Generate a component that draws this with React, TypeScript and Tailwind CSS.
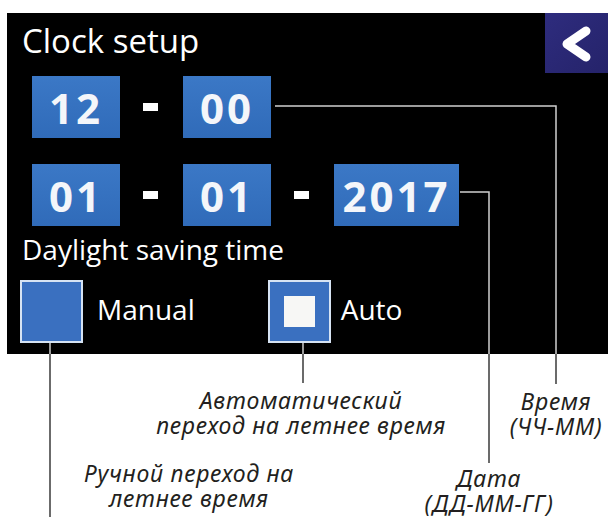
import { ReactNode } from "react";

const ValueBox = ({ value, wide }: { value: string; wide?: boolean }) => (
  <div
    className={`flex h-[62px] items-center justify-center bg-gradient-to-b from-[#3b78c6] to-[#306bb9] text-[42px] font-bold tracking-[3px] text-[#f4f6fa] ${
      wide ? "w-[125px]" : "w-[88px]"
    }`}
  >
    {value}
  </div>
);

const Dash = () => <div className="h-[8px] w-[15px] bg-white" />;

const Check = ({ checked }: { checked?: boolean }) => (
  <div className="flex h-[63px] w-[63px] items-center justify-center border-2 border-[#d6e3f3] bg-[#3a70c0]">
    {checked && <div className="h-[31px] w-[31px] bg-[#f7f7f5]" />}
  </div>
);

const Note = ({ x, y, lines }: { x: number; y: number; lines: string[] }) => (
  <div
    className="absolute flex -translate-x-1/2 flex-col items-center whitespace-nowrap font-['Noto_Sans',sans-serif] text-[23px] italic leading-[25px] tracking-[0.7px] text-[#231f20]"
    style={{ left: x, top: y }}
  >
    {lines.map((l) => (
      <span key={l}>{l}</span>
    ))}
  </div>
);

export default function App() {
  return (
    <div className="relative h-[517px] w-[608px] overflow-hidden bg-white font-['Open_Sans',sans-serif]">
      <div className="ml-[7px] mt-[13px] flex h-[341px] flex-col bg-black text-white">
        {/* header */}
        <div className="flex h-[60px] items-start justify-between">
          <div className="ml-[15px] mt-[8px] text-[33px] leading-[40px]">Clock setup</div>
          <button className="flex h-[60px] w-[63px] items-center justify-center bg-gradient-to-br from-[#2e2c7e] to-[#25236a]">
            <svg width="63" height="60" viewBox="0 0 63 60">
              <polyline
                points="41,18 22,31 41,44"
                fill="none"
                stroke="#fff"
                strokeWidth="9"
                strokeLinecap="round"
                strokeLinejoin="round"
              />
            </svg>
          </button>
        </div>

        {/* time */}
        <div className="ml-[25px] mt-[3px] flex items-center gap-[23px]">
          <ValueBox value="12" />
          <div className="mr-[2px]">
            <Dash />
          </div>
          <ValueBox value="00" />
        </div>

        {/* date */}
        <div className="ml-[25px] mt-[26px] flex items-center gap-[23px]">
          <ValueBox value="01" />
          <div className="mr-[2px]">
            <Dash />
          </div>
          <ValueBox value="01" />
          <div className="mr-[2px]">
            <Dash />
          </div>
          <ValueBox value="2017" wide />
        </div>

        <div className="ml-[15px] mt-[7px] text-[28px] leading-[32px]">Daylight saving time</div>

        {/* daylight options */}
        <div className="ml-[13px] mt-[15px] flex items-center">
          <Check />
          <span className="ml-[14px] mb-[6px] text-[28px] leading-[32px]">Manual</span>
          <div className="ml-[73px]">
            <Check checked />
          </div>
          <span className="ml-[10px] mb-[6px] text-[28px] leading-[32px]">Auto</span>
        </div>
      </div>

      {/* leader lines */}
      <svg className="pointer-events-none absolute left-0 top-0" width="608" height="517">
        <g fill="none" stroke="#cfcfcf" strokeWidth="1.5">
          <polyline points="275,106 556,106 556,354" />
          <polyline points="460,192 489,192 489,354" />
          <line x1="303" y1="343" x2="303" y2="354" />
          <line x1="50" y1="343" x2="50" y2="354" />
        </g>
        <g fill="none" stroke="#3a3a3a" strokeWidth="1.5">
          <line x1="556" y1="354" x2="556" y2="384" />
          <line x1="489" y1="354" x2="489" y2="463" />
          <line x1="303" y1="354" x2="303" y2="383" />
          <line x1="50" y1="354" x2="50" y2="517" />
        </g>
      </svg>

      <Note x={301} y={388} lines={["Автоматический", "переход на летнее время"]} />
      <Note x={556} y={389} lines={["Время", "(ЧЧ-ММ)"]} />
      <Note x={489} y={466} lines={["Дата", "(ДД-ММ-ГГ)"]} />
      <Note x={189} y={461} lines={["Ручной переход на", "летнее время"]} />
    </div>
  );
}
